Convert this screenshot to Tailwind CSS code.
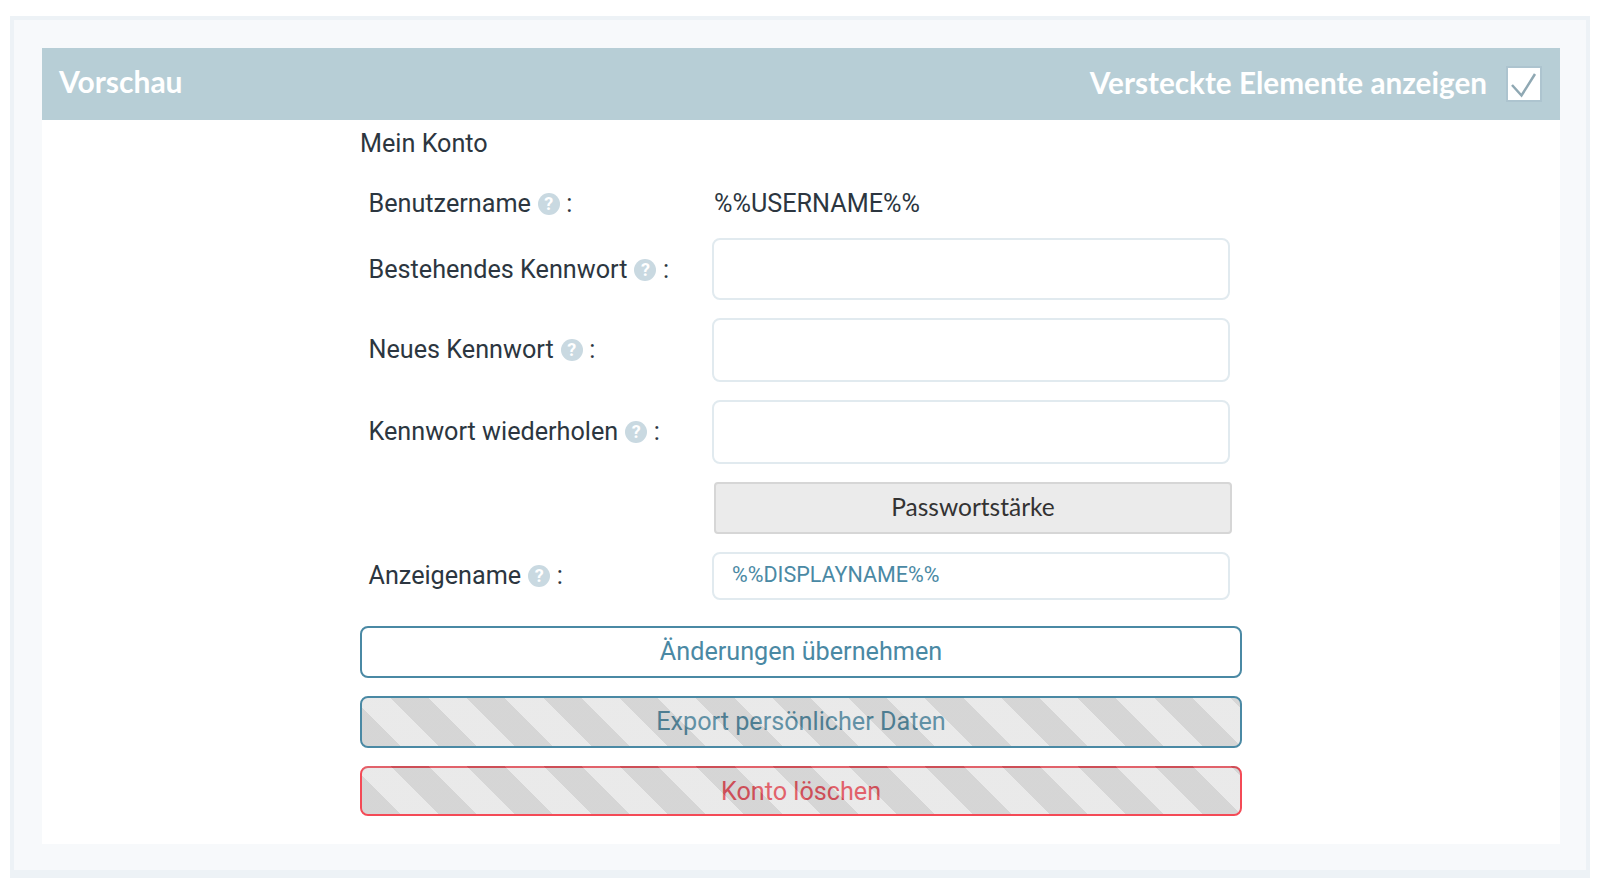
<!DOCTYPE html>
<html lang="de">
<head>
    <meta charset="UTF-8">
    <meta name="viewport" content="width=device-width, initial-scale=1.0">
    <title>Vorschau</title>
    <script src="https://cdn.jsdelivr.net/npm/@tailwindcss/browser@4"></script>
</head>
<body class="bg-white font-['Roboto',sans-serif] text-[#2c3640]">
    <div class="ml-[10px] mt-[16px] w-[1580px] h-[862px] bg-[#f7f9fb] border-x-4 border-t-4 border-b-8 border-[#edf2f6] pt-[28px] pl-[28px] pr-[26px]">
        <!-- Kopfzeile -->
        <div class="h-[72px] bg-[#b7ced6] flex items-center justify-between pl-[17px] pr-[18px] font-['Lato',sans-serif] font-bold text-white">
            <span class="text-[30px] -mt-[5px]">Vorschau</span>
            <div class="flex items-center gap-[19px]">
                <span class="text-[29.7px] -mt-[1px]">Versteckte Elemente anzeigen</span>
                <span class="w-[36px] h-[36px] bg-white border-2 border-[#adc4cf] flex items-center justify-center">
                    <svg width="32" height="32" viewBox="0 0 32 32" fill="none"><path d="M4 17l9.5 10.5L27 6" stroke="#8fa8b3" stroke-width="2.5"/></svg>
                </span>
            </div>
        </div>

        <div class="bg-white h-[724px] pl-[318px]">
            <div class="w-[882px]">
                <div class="h-[48px] flex items-center text-[25.2px]">Mein Konto</div>

                <div class="h-[70px] flex items-center text-[25.2px]">
                    <div class="w-[354px] pl-[8.5px] pt-[2px] flex items-center">Benutzername<span class="w-[22px] h-[22px] ml-[7px] mr-[6.5px] rounded-full bg-[#c9d9e1] text-white text-[18px] font-bold flex items-center justify-center">?</span>:</div>
                    <div class="pt-[2px]">%%USERNAME%%</div>
                </div>

                <div class="h-[62px] flex items-center text-[25.2px]">
                    <div class="w-[352px] pl-[8.5px] pt-[2px] flex items-center">Bestehendes Kennwort<span class="w-[22px] h-[22px] ml-[7px] mr-[6.5px] rounded-full bg-[#c9d9e1] text-white text-[18px] font-bold flex items-center justify-center">?</span>:</div>
                    <input type="password" class="w-[518px] h-full bg-white border-2 border-[#e1eaef] rounded-[8px]">
                </div>

                <div class="h-[64px] mt-[18px] flex items-center text-[25.2px]">
                    <div class="w-[352px] pl-[8.5px] flex items-center">Neues Kennwort<span class="w-[22px] h-[22px] ml-[7px] mr-[6.5px] rounded-full bg-[#c9d9e1] text-white text-[18px] font-bold flex items-center justify-center">?</span>:</div>
                    <input type="password" class="w-[518px] h-full bg-white border-2 border-[#e1eaef] rounded-[8px]">
                </div>

                <div class="h-[64px] mt-[18px] flex items-center text-[25.2px]">
                    <div class="w-[352px] pl-[8.5px] flex items-center">Kennwort wiederholen<span class="w-[22px] h-[22px] ml-[7px] mr-[6.5px] rounded-full bg-[#c9d9e1] text-white text-[18px] font-bold flex items-center justify-center">?</span>:</div>
                    <input type="password" class="w-[518px] h-full bg-white border-2 border-[#e1eaef] rounded-[8px]">
                </div>

                <div class="h-[52px] mt-[18px] ml-[354px]">
                    <button class="w-[518px] h-full pb-[1px] bg-[#ebebeb] border-2 border-[#d6d6d6] rounded-[4px] font-['Lato',sans-serif] text-[24.5px] text-[#333]">Passwortstärke</button>
                </div>

                <div class="h-[48px] mt-[18px] flex items-center text-[25.2px]">
                    <div class="w-[352px] pl-[8.5px] flex items-center">Anzeigename<span class="w-[22px] h-[22px] ml-[7px] mr-[6.5px] rounded-full bg-[#c9d9e1] text-white text-[18px] font-bold flex items-center justify-center">?</span>:</div>
                    <input type="text" value="%%DISPLAYNAME%%" class="w-[518px] h-full px-[18px] pb-[3px] bg-white border-2 border-[#e1eaef] rounded-[8px] text-[21.5px] text-[#4a89a4]">
                </div>

                <button class="block w-full h-[52px] mt-[26px] bg-white border-2 border-[#4a89a4] rounded-[8px] text-[25.2px] text-[#4a89a4]">Änderungen übernehmen</button>

                <button class="relative block w-full h-[52px] mt-[18px] bg-white border-2 border-[#4a89a4] rounded-[8px] text-[25.2px] text-[#4a89a4]">
                    Export persönlicher Daten
                    <span class="absolute inset-0 rounded-[6px] bg-[repeating-linear-gradient(45deg,rgba(90,90,90,0.25),rgba(90,90,90,0.25)_27px,rgba(170,170,170,0.25)_27px,rgba(170,170,170,0.25)_54px)]"></span>
                </button>

                <button class="relative block w-full h-[50px] mt-[18px] pt-[2px] bg-white border-2 border-[#f44a56] rounded-[8px] text-[25.2px] text-[#f44a56]">
                    Konto löschen
                    <span class="absolute -top-[2px] left-0 right-0 bottom-0 rounded-[6px] bg-[repeating-linear-gradient(45deg,rgba(90,90,90,0.25),rgba(90,90,90,0.25)_27px,rgba(170,170,170,0.25)_27px,rgba(170,170,170,0.25)_54px)]"></span>
                </button>
            </div>
        </div>
    </div>
</body>
</html>
